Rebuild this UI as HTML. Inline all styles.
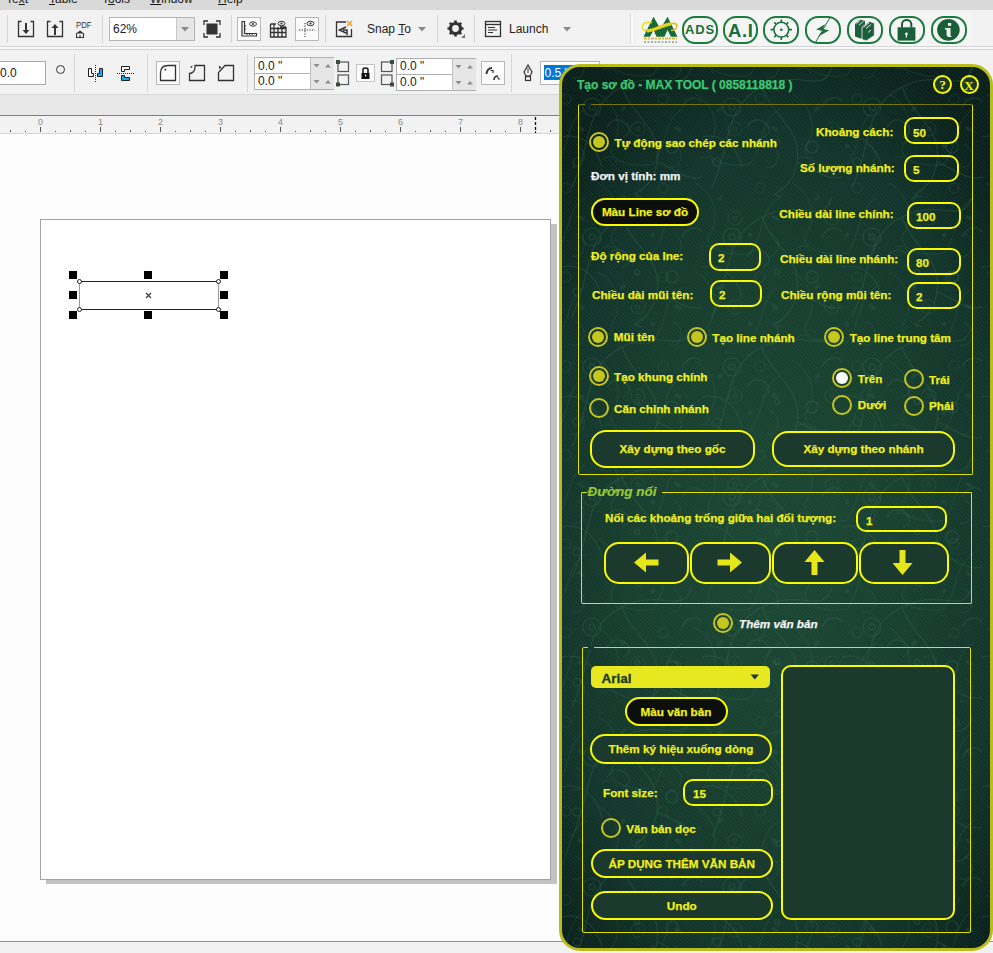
<!DOCTYPE html>
<html><head><meta charset="utf-8">
<style>
*{margin:0;padding:0;box-sizing:border-box}
html,body{width:993px;height:953px;overflow:hidden;background:#fdfdfd;font-family:"Liberation Sans",sans-serif;position:relative}
.a{position:absolute}
.t{position:absolute;white-space:nowrap;line-height:1}
.sep{position:absolute;width:1px;background:#d6d6d6}
#menubar{left:0;top:0;width:993px;height:10px;background:#d9d9d9;overflow:hidden}
#menubar span{position:absolute;top:-8px;font-size:12px;color:#1a1a1a}
#tb1{left:0;top:10px;width:993px;height:36px;background:#f2f2f2}
#tb1line{left:0;top:46px;width:993px;height:4px;background:#fafafa;border-top:1px solid #d4d4d4;border-bottom:1px solid #d4d4d4}
#tb2{left:0;top:50px;width:993px;height:45px;background:#f2f2f2;border-bottom:1px solid #d8d8d8}
#gray{left:0;top:95px;width:993px;height:20px;background:#e8e8e8}
#blue{left:0;top:115px;width:993px;height:1px;background:#10a0f0}
#ruler{left:0;top:116px;width:993px;height:18px;background:#f2f2f2;border-bottom:1px solid #d4d4d4}
#status{left:0;top:941px;width:993px;height:12px;background:#f2f2f2;border-top:1px solid #909090}
#page{left:40px;top:219px;width:511px;height:661px;background:#fff;border:1px solid #a2a2a2}
#shadow{left:46px;top:224px;width:511px;height:660px;background:#c2c2c2}
/* panel */
#panel{left:559px;top:64px;width:434px;height:887px;border:3px solid #b9bd1c;border-radius:21px;overflow:hidden;
 background:radial-gradient(ellipse 72% 62% at 50% 55%,#1c4634 0%,#183d2e 45%,#12322a 75%,#0c231e 92%,#0a1c19 100%)}
.y{color:#f0f01e;font-weight:bold;font-size:11.7px;-webkit-text-stroke:0.25px}
.grp{position:absolute;border:1px solid #e0e000;border-radius:2px}
.tb{position:absolute;border:2px solid #fafa00;border-radius:10px}
.btn{position:absolute;border:2px solid #fafa00;border-radius:15px;background:#1b392c;color:#f0f01e;-webkit-text-stroke:0.25px;font-weight:bold;font-size:11.7px;text-align:center;white-space:nowrap}
.bk{background:#0d0f0c}
.rad{position:absolute;width:20px;height:20px;border:2px solid #c6c61e;border-radius:50%}
.rad.on::after{content:"";position:absolute;left:2px;top:2px;width:12px;height:12px;border-radius:50%;background:#c6c61e}
.rad.wh::after{content:"";position:absolute;left:2px;top:2px;width:12px;height:12px;border-radius:50%;background:#fff}
</style></head><body>
<!-- menubar -->
<div id="menubar" class="a">
 <span style="left:6px">Te<u>x</u>t</span>
 <span style="left:49px"><u>T</u>able</span>
 <span style="left:102px">T<u>o</u>ols</span>
 <span style="left:150px"><u>W</u>indow</span>
 <span style="left:218px"><u>H</u>elp</span>
</div>
<div id="tb1" class="a"></div>
<div id="tb1line" class="a"></div>
<div id="tb2" class="a"></div>
<div id="gray" class="a"></div>
<div id="blue" class="a"></div>
<div id="ruler" class="a"></div>
<div id="shadow" class="a"></div>
<div id="page" class="a"></div>
<div id="status" class="a"></div>
<div class="a" style="left:10px;top:130px;width:1px;height:2px;background:#555"></div>
<div class="a" style="left:25px;top:131px;width:1px;height:1px;background:#555"></div>
<div class="a" style="left:40px;top:127px;width:1px;height:5px;background:#555"></div>
<div class="t" style="left:38px;top:118px;font-size:9px;color:#8a8a8a">0</div>
<div class="a" style="left:55px;top:131px;width:1px;height:1px;background:#555"></div>
<div class="a" style="left:70px;top:130px;width:1px;height:2px;background:#555"></div>
<div class="a" style="left:85px;top:131px;width:1px;height:1px;background:#555"></div>
<div class="a" style="left:100px;top:127px;width:1px;height:5px;background:#555"></div>
<div class="t" style="left:98px;top:118px;font-size:9px;color:#8a8a8a">1</div>
<div class="a" style="left:115px;top:131px;width:1px;height:1px;background:#555"></div>
<div class="a" style="left:130px;top:130px;width:1px;height:2px;background:#555"></div>
<div class="a" style="left:145px;top:131px;width:1px;height:1px;background:#555"></div>
<div class="a" style="left:160px;top:127px;width:1px;height:5px;background:#555"></div>
<div class="t" style="left:158px;top:118px;font-size:9px;color:#8a8a8a">2</div>
<div class="a" style="left:175px;top:131px;width:1px;height:1px;background:#555"></div>
<div class="a" style="left:190px;top:130px;width:1px;height:2px;background:#555"></div>
<div class="a" style="left:205px;top:131px;width:1px;height:1px;background:#555"></div>
<div class="a" style="left:220px;top:127px;width:1px;height:5px;background:#555"></div>
<div class="t" style="left:218px;top:118px;font-size:9px;color:#8a8a8a">3</div>
<div class="a" style="left:235px;top:131px;width:1px;height:1px;background:#555"></div>
<div class="a" style="left:250px;top:130px;width:1px;height:2px;background:#555"></div>
<div class="a" style="left:265px;top:131px;width:1px;height:1px;background:#555"></div>
<div class="a" style="left:280px;top:127px;width:1px;height:5px;background:#555"></div>
<div class="t" style="left:278px;top:118px;font-size:9px;color:#8a8a8a">4</div>
<div class="a" style="left:295px;top:131px;width:1px;height:1px;background:#555"></div>
<div class="a" style="left:310px;top:130px;width:1px;height:2px;background:#555"></div>
<div class="a" style="left:325px;top:131px;width:1px;height:1px;background:#555"></div>
<div class="a" style="left:340px;top:127px;width:1px;height:5px;background:#555"></div>
<div class="t" style="left:338px;top:118px;font-size:9px;color:#8a8a8a">5</div>
<div class="a" style="left:355px;top:131px;width:1px;height:1px;background:#555"></div>
<div class="a" style="left:370px;top:130px;width:1px;height:2px;background:#555"></div>
<div class="a" style="left:385px;top:131px;width:1px;height:1px;background:#555"></div>
<div class="a" style="left:400px;top:127px;width:1px;height:5px;background:#555"></div>
<div class="t" style="left:398px;top:118px;font-size:9px;color:#8a8a8a">6</div>
<div class="a" style="left:415px;top:131px;width:1px;height:1px;background:#555"></div>
<div class="a" style="left:430px;top:130px;width:1px;height:2px;background:#555"></div>
<div class="a" style="left:445px;top:131px;width:1px;height:1px;background:#555"></div>
<div class="a" style="left:460px;top:127px;width:1px;height:5px;background:#555"></div>
<div class="t" style="left:458px;top:118px;font-size:9px;color:#8a8a8a">7</div>
<div class="a" style="left:475px;top:131px;width:1px;height:1px;background:#555"></div>
<div class="a" style="left:490px;top:130px;width:1px;height:2px;background:#555"></div>
<div class="a" style="left:505px;top:131px;width:1px;height:1px;background:#555"></div>
<div class="a" style="left:520px;top:127px;width:1px;height:5px;background:#555"></div>
<div class="t" style="left:518px;top:118px;font-size:9px;color:#8a8a8a">8</div>
<div class="a" style="left:535px;top:131px;width:1px;height:1px;background:#555"></div>
<div class="a" style="left:550px;top:130px;width:1px;height:2px;background:#555"></div>
<svg class="a" style="left:534px;top:116px" width="3" height="17"><path d="M1.5 1V17" stroke="#111" stroke-width="1.3" stroke-dasharray="3 2"/></svg>
<!-- selected rect -->
<div class="a" style="left:79px;top:281px;width:140px;height:29px;border-top:1.3px solid #222;border-bottom:1.3px solid #222;border-left:1.5px solid #9a9a9a;border-right:1.5px solid #9a9a9a"></div>
<div class="a" style="left:69px;top:271px;width:8px;height:8px;background:#000"></div>
<div class="a" style="left:144px;top:271px;width:8px;height:8px;background:#000"></div>
<div class="a" style="left:220px;top:271px;width:8px;height:8px;background:#000"></div>
<div class="a" style="left:69px;top:291px;width:8px;height:8px;background:#000"></div>
<div class="a" style="left:220px;top:291px;width:8px;height:8px;background:#000"></div>
<div class="a" style="left:69px;top:311px;width:8px;height:8px;background:#000"></div>
<div class="a" style="left:144px;top:311px;width:8px;height:8px;background:#000"></div>
<div class="a" style="left:220px;top:311px;width:8px;height:8px;background:#000"></div>
<div class="a" style="left:76.5px;top:278.5px;width:5px;height:5px;background:#fff;border:1px solid #222;border-radius:50%"></div>
<div class="a" style="left:215.5px;top:278.5px;width:5px;height:5px;background:#fff;border:1px solid #222;border-radius:50%"></div>
<div class="a" style="left:76.5px;top:306.5px;width:5px;height:5px;background:#fff;border:1px solid #222;border-radius:50%"></div>
<div class="a" style="left:215.5px;top:306.5px;width:5px;height:5px;background:#fff;border:1px solid #222;border-radius:50%"></div>
<svg class="a" style="left:145px;top:292px" width="7" height="7"><path d="M1 1L6 6M6 1L1 6" stroke="#444" stroke-width="1.4"/></svg>



<!-- TOOLBAR 1 -->
<div class="sep" style="left:7px;top:15px;height:28px"></div>
<svg class="a" style="left:17px;top:20px" width="18" height="18" viewBox="0 0 18 18">
 <path d="M4.5 1.5H1.5V16.5H16.5V1.5H13.5" fill="none" stroke="#333" stroke-width="1.3"/>
 <path d="M9 3V11" stroke="#333" stroke-width="2"/><path d="M5.5 10H12.5L9 14Z" fill="#333"/>
</svg>
<svg class="a" style="left:46px;top:20px" width="18" height="18" viewBox="0 0 18 18">
 <path d="M4.5 1.5H1.5V16.5H16.5V1.5H13.5" fill="none" stroke="#333" stroke-width="1.3"/>
 <path d="M9 7V15" stroke="#333" stroke-width="2"/><path d="M5.5 8H12.5L9 4Z" fill="#333"/>
</svg>
<div class="t" style="left:75.5px;top:21px;font-size:8.5px;color:#333;transform:scaleX(0.92);transform-origin:0 0">PDF</div>
<svg class="a" style="left:76px;top:30px" width="9" height="8" viewBox="0 0 9 8"><path d="M0.5 3V7.5H7.5V3 M4 7.5V5" fill="none" stroke="#333" stroke-width="1.1"/><path d="M0 3.5L4 0.5L8 3.5Z" fill="#333"/></svg>
<div class="sep" style="left:102px;top:15px;height:28px"></div>
<div class="a" style="left:109px;top:17px;width:86px;height:24px;background:#fff;border:1px solid #b4b4b4"></div>
<div class="a" style="left:176px;top:18px;width:18px;height:22px;background:#e6e6e6;border-left:1px solid #c8c8c8"></div>
<svg class="a" style="left:181px;top:27px" width="9" height="5"><path d="M0 0H8L4 4.5Z" fill="#8a8a8a"/></svg>
<div class="t" style="left:113px;top:23px;font-size:12px;color:#222">62%</div>
<svg class="a" style="left:203px;top:20px" width="18" height="18" viewBox="0 0 18 18">
 <path d="M1 5V1H5 M13 1H17V5 M17 13V17H13 M5 17H1V13" fill="none" stroke="#333" stroke-width="1.3"/>
 <rect x="3.5" y="3.5" width="11" height="11" fill="#333"/>
</svg>
<div class="sep" style="left:231px;top:15px;height:28px"></div>
<div class="a" style="left:237px;top:17px;width:24px;height:24px;background:#fcfcfc;border:1px solid #b8b8b8"></div>
<svg class="a" style="left:240px;top:20px" width="18" height="18" viewBox="0 0 18 18">
 <path d="M2 1.5V16H16.5V13.5H4.5V1.5Z" fill="none" stroke="#333" stroke-width="1.2"/>
 <path d="M7 13.5V15 M9.5 13.5V15 M12 13.5V15 M4.5 6H6 M4.5 9H6" stroke="#333" stroke-width="1"/>
 <ellipse cx="13" cy="4" rx="3.5" ry="2.2" fill="none" stroke="#333" stroke-width="1"/><circle cx="13" cy="4" r="1.1" fill="#333"/>
</svg>
<svg class="a" style="left:269px;top:20px" width="18" height="18" viewBox="0 0 18 18">
 <path d="M1.5 4V17H17V7 M1.5 4H7 M1.5 8.5H17 M1.5 12.5H17 M5 4V17 M9 7V17 M13 7V17 M17 7H11" fill="none" stroke="#333" stroke-width="1.3"/>
 <ellipse cx="12.5" cy="3.5" rx="3.5" ry="2.2" fill="none" stroke="#333" stroke-width="1"/><circle cx="12.5" cy="3.5" r="1.1" fill="#333"/>
</svg>
<div class="a" style="left:295px;top:17px;width:24px;height:24px;background:#fcfcfc;border:1px solid #b8b8b8"></div>
<svg class="a" style="left:298px;top:20px" width="18" height="18" viewBox="0 0 18 18">
 <path d="M7 3V17 M1 10H17" fill="none" stroke="#333" stroke-width="1" stroke-dasharray="1.3 1.3"/>
 <ellipse cx="12.5" cy="3.5" rx="3.5" ry="2.2" fill="none" stroke="#333" stroke-width="1"/><circle cx="12.5" cy="3.5" r="1.1" fill="#333"/>
</svg>
<div class="sep" style="left:325px;top:15px;height:28px"></div>
<svg class="a" style="left:335px;top:20px" width="18" height="18" viewBox="0 0 18 18">
 <path d="M11 2H1.5V16.5H16.5V9" fill="none" stroke="#333" stroke-width="1.3"/>
 <path d="M12 1L17 6 M17 1L12 6" stroke="#e0a020" stroke-width="1.3"/>
 <path d="M11 7L4.5 10L11 13 M8 10H12V15" fill="none" stroke="#333" stroke-width="1.5"/>
</svg>
<div class="t" style="left:367px;top:23px;font-size:12px;color:#222">Snap <u>T</u>o</div>
<svg class="a" style="left:418px;top:27px" width="9" height="5"><path d="M0 0H8L4 4.5Z" fill="#8a8a8a"/></svg>
<div class="sep" style="left:437px;top:15px;height:28px"></div>
<svg class="a" style="left:446px;top:19px" width="20" height="20" viewBox="0 0 20 20">
 <circle cx="9.5" cy="9.5" r="5" fill="none" stroke="#333" stroke-width="3.2"/>
 <path d="M9.5 1.5V4 M9.5 15V17.5 M1.5 9.5H4 M15 9.5H17.5 M3.8 3.8L5.6 5.6 M13.4 13.4L15.2 15.2 M3.8 15.2L5.6 13.4 M13.4 5.6L15.2 3.8" stroke="#333" stroke-width="2.6"/>
 <path d="M19 15V19H15Z" fill="#777"/>
</svg>
<div class="sep" style="left:474px;top:15px;height:28px"></div>
<svg class="a" style="left:484px;top:20px" width="18" height="18" viewBox="0 0 18 18">
 <rect x="1.5" y="1.5" width="15" height="15" fill="none" stroke="#333" stroke-width="1.3"/>
 <path d="M1.5 4.5H16.5" stroke="#333" stroke-width="1.3"/>
 <path d="M4 7.5H11 M4 10H13 M4 12.5H9" stroke="#333" stroke-width="1"/>
</svg>
<div class="t" style="left:509px;top:23px;font-size:12px;color:#222">Launch</div>
<svg class="a" style="left:563px;top:27px" width="9" height="5"><path d="M0 0H8L4 4.5Z" fill="#8a8a8a"/></svg>
<div class="a" style="left:630px;top:13px;width:3px;height:31px;background:#fbfbfb;border-left:1px solid #dadada"></div>
<div class="a" style="left:637px;top:12px;width:335px;height:34px;background:#f5f5f5"></div>


<!-- plugin toolbar -->
<svg class="a" style="left:638px;top:14px" width="44" height="32" viewBox="0 0 44 32">
 <path d="M5.5 22.8L15.5 2.8L22.5 15L29.5 2.8L39.5 22.8H33L29.5 16L26.5 22.8H18.5L15.5 16L12 22.8Z" fill="#1a6a38"/>
 <path d="M4.5 12.5C4.5 8.5 9 8 14 8.5 M8 16.5C4.5 16 4 14 4.5 12.5" fill="none" stroke="#ece01c" stroke-width="1.6"/>
 <path d="M7 16.5C17 17 25 11 34.5 9.5C38.5 9 39.5 11 38.5 13.5C37.5 15.5 35 16.5 33 16.5" fill="none" stroke="#d8c020" stroke-width="1.6"/>
 <path d="M9 17C17 16.5 24 11 33 9.8" fill="none" stroke="#e8d21c" stroke-width="3.2"/>
 <path d="M6 24.5H39" stroke="#d4b428" stroke-width="2.2" stroke-dasharray="3 1 2 1" opacity="0.9"/>
 <path d="M6 28H39" stroke="#2a5a3a" stroke-width="1.2" stroke-dasharray="2 1.5" opacity="0.8"/>
</svg>
<div class="a" style="left:682px;top:16px;width:36px;height:28px;border:2.2px solid #1b7a3e;border-radius:13px"></div>
<div class="t" style="left:685px;top:23.2px;font-size:13px;font-weight:bold;color:#1b6e3a;letter-spacing:0.9px">ADS</div>
<div class="a" style="left:723px;top:16px;width:35px;height:28px;border:2.2px solid #1b7a3e;border-radius:13px"></div>
<div class="t" style="left:728px;top:21.5px;font-size:18.5px;font-weight:bold;color:#1b6e3a;letter-spacing:0.6px">A.I</div>
<div class="a" style="left:763px;top:16px;width:36px;height:28px;border:2.2px solid #1b7a3e;border-radius:13px"></div>
<svg class="a" style="left:763px;top:16px" width="36" height="28" viewBox="763 16 36 28">
 <circle cx="781.3" cy="29.7" r="7.4" fill="none" stroke="#1b6e3a" stroke-width="1.5"/>
 <circle cx="781.3" cy="29.7" r="1.3" fill="#1b6e3a"/>
 <path d="M781.3 19.4V22.4 M781.3 37V40 M770.6 29.7H773.9 M788.7 29.7H792 M774.3 22.3L776 24 M788.3 22.3L786.6 24 M774.3 37.1L776 35.4 M788.3 37.1L786.6 35.4" stroke="#1b6e3a" stroke-width="1.7"/>
</svg>
<div class="a" style="left:805px;top:16px;width:36px;height:28px;border:2.2px solid #1b7a3e;border-radius:13px"></div>
<svg class="a" style="left:805px;top:16px" width="36" height="28" viewBox="805 16 36 28">
 <path d="M830 17.5L815.5 42.5" stroke="#1b6e3a" stroke-width="1"/>
 <path d="M825 24.2L816.2 29.6L822.8 31L817.5 37L829.3 30.3L823 29Z" fill="#1b6e3a"/>
</svg>
<div class="a" style="left:846.5px;top:16px;width:36px;height:28px;border:2.2px solid #1b7a3e;border-radius:13px"></div>
<svg class="a" style="left:846px;top:16px" width="36" height="28" viewBox="846 16 36 28">
 <path d="M855 24L860 19.5L865 21V37.5L860.5 38.5L855 36.5Z" fill="#1b5e3a"/>
 <path d="M862 27L869.5 21.5L874.3 23V35.5L866.5 40.7L862 39.5Z" fill="#1b5e3a" stroke="#f0f0f0" stroke-width="0.8"/>
 <path d="M856.5 23.8L860.5 20.3 M859 25.2L863.5 21.3 M863.5 27.2L869 23 M866 28.5L871 24.5 M868 32.5L871 30" stroke="#f0f0f0" stroke-width="0.9"/>
</svg>
<div class="a" style="left:888.5px;top:16px;width:36px;height:28px;border:2.2px solid #1b7a3e;border-radius:13px"></div>
<svg class="a" style="left:888px;top:16px" width="36" height="28" viewBox="888 16 36 28">
 <path d="M902 27.5V24C902 18.8 911.3 18.8 911.3 24V27.5" fill="none" stroke="#1b5e3a" stroke-width="2"/>
 <rect x="897.6" y="27.3" width="17.8" height="13.3" fill="#1b5e3a"/>
 <circle cx="906.4" cy="34" r="1.4" fill="#f0f0f0"/><rect x="905.8" y="34" width="1.2" height="3.5" fill="#f0f0f0"/>
</svg>
<div class="a" style="left:930.5px;top:16px;width:36px;height:28px;border:2.2px solid #1b7a3e;border-radius:13px"></div>
<svg class="a" style="left:930px;top:16px" width="37" height="28" viewBox="930 16 37 28">
 <ellipse cx="948.4" cy="29.85" rx="11.3" ry="10.9" fill="#1b5e3a"/>
 <rect x="947.9" y="23" width="3.3" height="2.8" fill="#f2f2f2"/>
 <path d="M945 28H950.5V35C950.5 36 951 36.2 951.6 36.2V37H949C947.5 37 946.6 36 946.6 34.5V29.5H945Z" fill="#f2f2f2"/>
</svg>
<!-- TOOLBAR 2 -->
<div class="a" style="left:0;top:61px;width:46px;height:24px;background:#fff;border:1px solid #a8a8a8;border-left:none"></div>
<div class="t" style="left:0px;top:67px;font-size:12px;color:#222">0.0</div>
<div class="a" style="left:56px;top:64.8px;width:9px;height:9px;border:1.2px solid #333;border-radius:50%"></div>
<div class="sep" style="left:74px;top:54px;height:38px"></div>
<svg class="a" style="left:84px;top:60px" width="56" height="26" viewBox="84 60 56 26">
 <path d="M88.5 68.5H91.5V73.5H93.5V76.5H88.5Z" fill="#fff" stroke="#222" stroke-width="1"/>
 <path d="M99.5 68.5H102.5V76.5H97.5V73.5H99.5Z" fill="#1aa8f0" stroke="#222" stroke-width="1"/>
 <path d="M95.5 65V82" stroke="#222" stroke-width="1" stroke-dasharray="1 1"/>
 <path d="M121.5 66.5H129.5V69.5H124.5V71.5H121.5Z" fill="#fff" stroke="#222" stroke-width="1"/>
 <path d="M121.5 75.5H124.5V77.5H129.5V80.5H121.5Z" fill="#1aa8f0" stroke="#222" stroke-width="1"/>
 <path d="M117 73.5H134" stroke="#222" stroke-width="1" stroke-dasharray="1 1"/>
</svg>
<div class="sep" style="left:147px;top:54px;height:38px"></div>
<div class="a" style="left:156px;top:61px;width:24px;height:24px;background:#fcfcfc;border:1px solid #b8b8b8"></div>
<svg class="a" style="left:159px;top:64px" width="18" height="18" viewBox="0 0 18 18">
 <path d="M1.5 16.5V9C1.5 4 4.5 1.5 9 1.5H16.5V16.5Z" fill="none" stroke="#333" stroke-width="1.3"/>
 <path d="M5 5.5L7.5 4.5L6.5 7Z" fill="#333"/>
</svg>
<svg class="a" style="left:188px;top:64px" width="18" height="18" viewBox="0 0 18 18">
 <path d="M1.5 16.5V9.5C4.5 9.5 7 7 7 3.5V1.5H16.5V16.5Z" fill="none" stroke="#333" stroke-width="1.3"/>
 <path d="M2 3L4.5 1.5L4 4Z" fill="#333"/>
</svg>
<svg class="a" style="left:217px;top:64px" width="18" height="18" viewBox="0 0 18 18">
 <path d="M1.5 16.5V8.5L8 1.5H16.5V16.5Z" fill="none" stroke="#333" stroke-width="1.3"/>
 <path d="M2 1.5L4.5 3.5L2 5Z" fill="#333"/>
</svg>
<div class="sep" style="left:247px;top:54px;height:38px"></div>
<!-- spin pair 1 -->
<div class="a" style="left:254px;top:57px;width:80px;height:33px;background:#fff;border:1px solid #b0b0b0"></div>
<div class="a" style="left:254px;top:73px;width:80px;height:1px;background:#b0b0b0"></div>
<div class="a" style="left:309.5px;top:58px;width:24px;height:31px;background:#e6e6e6;border-left:1px solid #c0c0c0"></div>
<svg class="a" style="left:310px;top:60px" width="24" height="28"><path d="M3.5 4H9.5L6.5 7.5Z M15 7.5H21L18 4Z M3.5 20H9.5L6.5 23.5Z M15 23.5H21L18 20Z" fill="#8c8c8c"/></svg>
<div class="t" style="left:258px;top:59.5px;font-size:12px;color:#222">0.0 "</div>
<div class="t" style="left:258px;top:75px;font-size:12px;color:#222">0.0 "</div>
<svg class="a" style="left:335px;top:59px" width="16" height="28" viewBox="0 0 16 28">
 <rect x="3" y="3" width="10.5" height="9.5" fill="none" stroke="#555" stroke-width="1.2"/>
 <rect x="3" y="16" width="10.5" height="9.5" fill="none" stroke="#555" stroke-width="1.2"/>
 <rect x="1" y="1" width="4" height="4" fill="#3c4c3c"/><rect x="1" y="23.5" width="4" height="4" fill="#3c4c3c"/>
</svg>
<div class="a" style="left:356px;top:64px;width:19px;height:18px;background:#fcfcfc;border:1px solid #c4c4c4"></div>
<svg class="a" style="left:359px;top:66px" width="13" height="14" viewBox="0 0 13 14"><path d="M4 7V3.5C4 1.5 9 1.5 9 3.5V7" fill="none" stroke="#111" stroke-width="1.5"/><rect x="2.5" y="7" width="8" height="6" fill="#111"/><rect x="6" y="8.5" width="1.2" height="2" fill="#fff"/></svg>
<svg class="a" style="left:379px;top:59px" width="16" height="28" viewBox="0 0 16 28">
 <rect x="2.5" y="3" width="10.5" height="9.5" fill="none" stroke="#555" stroke-width="1.2"/>
 <rect x="2.5" y="16" width="10.5" height="9.5" fill="none" stroke="#555" stroke-width="1.2"/>
 <rect x="11" y="1" width="4" height="4" fill="#3c4c3c"/><rect x="11" y="23.5" width="4" height="4" fill="#3c4c3c"/>
</svg>
<!-- spin pair 2 -->
<div class="a" style="left:396px;top:57.5px;width:80px;height:33px;background:#fff;border:1px solid #b0b0b0"></div>
<div class="a" style="left:396px;top:73.5px;width:80px;height:1px;background:#b0b0b0"></div>
<div class="a" style="left:451.5px;top:58.5px;width:24px;height:31px;background:#e6e6e6;border-left:1px solid #c0c0c0"></div>
<svg class="a" style="left:452px;top:60.5px" width="24" height="28"><path d="M3.5 4H9.5L6.5 7.5Z M15 7.5H21L18 4Z M3.5 20H9.5L6.5 23.5Z M15 23.5H21L18 20Z" fill="#8c8c8c"/></svg>
<div class="t" style="left:400px;top:60px;font-size:12px;color:#222">0.0 "</div>
<div class="t" style="left:400px;top:75.5px;font-size:12px;color:#222">0.0 "</div>
<div class="a" style="left:481px;top:61px;width:24px;height:24px;background:#fcfcfc;border:1px solid #b8b8b8"></div>
<svg class="a" style="left:484px;top:64px" width="18" height="18" viewBox="0 0 18 18">
 <path d="M2.5 10C2.5 6.5 5 4 8 4" fill="none" stroke="#333" stroke-width="2"/><path d="M6.5 6.5H9V9" fill="none" stroke="#333" stroke-width="1.2"/>
 <path d="M10 16C10 13.5 11.5 12 14 12" fill="none" stroke="#333" stroke-width="1.6"/><path d="M13 14H15V16" fill="none" stroke="#333" stroke-width="1"/>
</svg>
<div class="sep" style="left:511px;top:54px;height:38px"></div>
<svg class="a" style="left:522px;top:64px" width="12" height="18" viewBox="0 0 12 18">
 <path d="M6 1L2 8L4 12H8L10 8Z" fill="none" stroke="#333" stroke-width="1.2"/><path d="M6 4V9" stroke="#333" stroke-width="1"/>
 <rect x="3.5" y="12.5" width="5" height="4" fill="none" stroke="#333" stroke-width="1.2"/>
</svg>
<div class="a" style="left:540px;top:61px;width:60px;height:24px;background:#fff;border:1px solid #b4b4b4"></div>
<div class="a" style="left:544px;top:65px;width:32px;height:15px;background:#0078d7"></div>
<div class="t" style="left:544.5px;top:67px;font-size:12px;color:#fff">0.5 "</div>

<!-- PANEL -->
<div id="panel" class="a"><svg class="a" style="left:0;top:0" width="428" height="882">
 <defs>
  <pattern id="str" width="3" height="3" patternUnits="userSpaceOnUse" patternTransform="rotate(-45)">
   <rect width="1.2" height="3" fill="#3a7a5a" opacity="0.16"/>
  </pattern>
  <pattern id="flo" width="140" height="130" patternUnits="userSpaceOnUse">
   <g fill="none" stroke="#3d7a5c" stroke-width="1.1" opacity="0.28">
    <path d="M10 120C30 80 20 40 60 20S120 30 130 0"/>
    <path d="M60 20C70 50 100 60 95 95S60 125 80 130"/>
    <circle cx="30" cy="40" r="9"/><circle cx="30" cy="40" r="3"/>
    <circle cx="110" cy="80" r="6"/>
    <path d="M0 70C20 65 35 80 40 100"/>
    <path d="M95 95C110 100 125 115 140 110"/>
    <path d="M120 40c5-10 15-12 20-5"/>
    <circle cx="75" cy="75" r="2.5"/><circle cx="15" cy="95" r="4"/>
    <path d="M45 60q8-12 18-4t-2 14"/>
   </g>
  </pattern>
  <pattern id="flo2" width="97" height="89" patternUnits="userSpaceOnUse" patternTransform="translate(31 17)">
   <g fill="none" stroke="#3d7a5c" stroke-width="1" opacity="0.22">
    <path d="M5 10C25 20 30 45 20 60S40 85 60 80"/>
    <path d="M60 80C75 60 70 35 90 25"/>
    <circle cx="70" cy="15" r="5"/><circle cx="45" cy="45" r="7"/><circle cx="45" cy="45" r="2"/>
    <path d="M80 60q10 5 8 15t-12 8"/>
    <path d="M10 75c6-4 12-2 14 4"/>
   </g>
   <g fill="#3d7a5c" opacity="0.18">
    <ellipse cx="85" cy="45" rx="4" ry="2" transform="rotate(30 85 45)"/>
    <ellipse cx="30" cy="25" rx="3.5" ry="1.8" transform="rotate(-40 30 25)"/>
    <circle cx="60" cy="62" r="2.2"/>
   </g>
  </pattern>
 </defs>
 <rect width="428" height="882" fill="url(#flo)"/>
 <rect width="428" height="882" fill="url(#flo2)"/>
 <rect width="428" height="882" fill="url(#str)"/>
</svg></div>

<div class="t" style="left:577px;top:79px;font-size:12px;font-weight:bold;color:#3dc873;-webkit-text-stroke:0.25px">Tạo sơ đồ - MAX TOOL ( 0858118818 )</div>


<!-- group 1 -->
<div class="grp" style="left:578px;top:104px;width:395px;height:371px;border-top-color:#72780e"></div>
<div class="a" style="left:585px;top:103px;width:6px;height:3px;background:#0f2a22"></div>
<div class="rad on" style="left:589px;top:132px"></div>
<div class="t y" style="left:614.5px;top:137.4px">Tự động sao chép các nhánh</div>
<div class="t y" style="left:591px;top:169.7px;color:#f2f2f2">Đơn vị tính: mm</div>
<div class="btn bk" style="left:591px;top:198px;width:108px;height:28px;line-height:24px">Màu Line sơ đồ</div>
<div class="t y" style="left:591px;top:249.8px">Độ rộng của lne:</div>
<div class="tb" style="left:709px;top:243px;width:52px;height:28px"></div>
<div class="t y" style="left:718px;top:252px">2</div>
<div class="t y" style="left:592px;top:288.6px">Chiều dài mũi tên:</div>
<div class="tb" style="left:710px;top:280px;width:52px;height:27px"></div>
<div class="t y" style="left:719px;top:289px">2</div>

<div class="t y" style="left:816px;top:125.9px">Khoảng cách:</div>
<div class="tb" style="left:904px;top:117px;width:55px;height:27px"></div>
<div class="t y" style="left:913px;top:127px">50</div>
<div class="t y" style="left:800px;top:162.1px">Số lượng nhánh:</div>
<div class="tb" style="left:904px;top:154.5px;width:55px;height:27px"></div>
<div class="t y" style="left:913px;top:164px">5</div>
<div class="t y" style="left:779.3px;top:208.3px">Chiều dài line chính:</div>
<div class="tb" style="left:907px;top:201.5px;width:54px;height:27px"></div>
<div class="t y" style="left:916px;top:211px">100</div>
<div class="t y" style="left:780px;top:252.8px">Chiều dài line nhánh:</div>
<div class="tb" style="left:907px;top:247.5px;width:54px;height:27px"></div>
<div class="t y" style="left:916px;top:257px">80</div>
<div class="t y" style="left:781px;top:289.1px">Chiều rộng mũi tên:</div>
<div class="tb" style="left:907px;top:281.5px;width:54px;height:27px"></div>
<div class="t y" style="left:916px;top:291px">2</div>

<div class="rad on" style="left:588px;top:327px"></div>
<div class="t y" style="left:613.8px;top:330.9px">Mũi tên</div>
<div class="rad on" style="left:687px;top:327px"></div>
<div class="t y" style="left:712.3px;top:331.6px">Tạo line nhánh</div>
<div class="rad on" style="left:824px;top:327px"></div>
<div class="t y" style="left:849.7px;top:332px">Tạo line trung tâm</div>
<div class="rad on" style="left:589px;top:366px"></div>
<div class="t y" style="left:614px;top:371px">Tạo khung chính</div>
<div class="rad" style="left:589px;top:398px"></div>
<div class="t y" style="left:614px;top:402.5px">Căn chỉnh nhánh</div>
<div class="rad wh" style="left:832px;top:368px"></div>
<div class="t y" style="left:857.7px;top:373px">Trên</div>
<div class="rad" style="left:904px;top:369px"></div>
<div class="t y" style="left:929px;top:373.5px">Trái</div>
<div class="rad" style="left:832px;top:395px"></div>
<div class="t y" style="left:857.7px;top:399px">Dưới</div>
<div class="rad" style="left:904px;top:396px"></div>
<div class="t y" style="left:929px;top:400px">Phải</div>
<div class="btn" style="left:590px;top:430px;width:165px;height:38px;line-height:34px;border-radius:16px">Xây dựng theo gốc</div>
<div class="btn" style="left:772px;top:430.5px;width:183px;height:36px;line-height:32px;border-radius:16px">Xây dựng theo nhánh</div>

<!-- group 2 -->
<div class="grp" style="left:580.5px;top:492px;width:391px;height:112px;border-top:none"></div>
<div class="a" style="left:580.5px;top:492px;width:6px;height:1px;background:#e0e000;border-top-left-radius:2px"></div>
<div class="a" style="left:662px;top:492px;width:309.5px;height:1px;background:#e0e000"></div>
<div class="t" style="left:587.5px;top:485px;font-size:13.5px;font-weight:bold;font-style:italic;color:#98c836;-webkit-text-stroke:0.2px">Đường nối</div>
<div class="t y" style="left:605px;top:511.9px">Nối các khoảng trống giữa hai đối tượng:</div>
<div class="tb" style="left:855.5px;top:505.5px;width:91px;height:26px"></div>
<div class="t y" style="left:866px;top:515px">1</div>
<div class="btn" style="left:603.5px;top:541.5px;width:85px;height:42px"></div>
<div class="btn" style="left:689.5px;top:541.5px;width:81px;height:42px"></div>
<div class="btn" style="left:771.5px;top:541.5px;width:86px;height:42px"></div>
<div class="btn" style="left:858.5px;top:541.5px;width:90px;height:42px"></div>
<svg class="a" style="left:603px;top:541px" width="346" height="43" viewBox="603 541 346 43">
 <path fill="#e6e619" d="M634 562.5 L646 552.5 L646 559.5 L658.5 559.5 L658.5 565.5 L646 565.5 L646 572.5 Z"/>
 <path fill="#e6e619" d="M742 562.5 L730 552.5 L730 559.5 L717.5 559.5 L717.5 565.5 L730 565.5 L730 572.5 Z"/>
 <path fill="#e6e619" d="M814.5 550 L824.5 562 L817.5 562 L817.5 575 L811.5 575 L811.5 562 L804.5 562 Z"/>
 <path fill="#e6e619" d="M902.5 575 L912.5 563 L905.5 563 L905.5 550 L899.5 550 L899.5 563 L892.5 563 Z"/>
</svg>
<div class="rad on" style="left:713px;top:613px"></div>
<div class="t" style="left:739px;top:617.5px;font-size:11.7px;font-weight:bold;font-style:italic;color:#f4f4f4;-webkit-text-stroke:0.25px">Thêm văn bản</div>

<!-- group 3 -->
<div class="grp" style="left:581.5px;top:647px;width:389px;height:286px"></div>
<div class="a" style="left:588px;top:646px;width:6px;height:3px;background:#17392b"></div>
<div class="a" style="left:591px;top:665.5px;width:178.5px;height:22.5px;background:#e8e820;border-radius:5px"></div>
<div class="t" style="left:601.5px;top:671.5px;font-size:13.5px;font-weight:bold;color:#1c3a2c;-webkit-text-stroke:0.3px">Arial</div>
<svg class="a" style="left:750px;top:674px" width="10" height="6"><path d="M0.5 0.5 L9 0.5 L4.75 5.5Z" fill="#1c3a2c"/></svg>
<div class="btn bk" style="left:624.5px;top:696.5px;width:103px;height:29px;line-height:25px">Màu văn bản</div>
<div class="btn" style="left:590px;top:733.5px;width:182px;height:30px;line-height:26px">Thêm ký hiệu xuống dòng</div>
<div class="t y" style="left:603px;top:787px">Font size:</div>
<div class="tb" style="left:683px;top:778.5px;width:89.5px;height:27px"></div>
<div class="t y" style="left:693px;top:787.5px">15</div>
<div class="rad" style="left:600.5px;top:818px"></div>
<div class="t y" style="left:626.3px;top:823px">Văn bản dọc</div>
<div class="btn" style="left:591px;top:848.5px;width:181.5px;height:29px;line-height:25px">ÁP DỤNG THÊM VĂN BẢN</div>
<div class="btn" style="left:591px;top:890.5px;width:181.5px;height:29px;line-height:25px">Undo</div>
<div class="a" style="left:780.5px;top:665px;width:174.5px;height:255px;border:2px solid #fafa00;border-radius:10px;background:#1b392c"></div>

<!-- help / close -->
<div class="a" style="left:933px;top:75px;width:19px;height:19px;border:2px solid #fafa00;border-radius:50%;background:#1b392c"></div>
<div class="t" style="left:936.5px;top:77px;font:bold 13.5px 'Liberation Serif';color:#f6f600;width:12px;text-align:center">?</div>
<div class="a" style="left:959.5px;top:75px;width:19px;height:19px;border:2px solid #fafa00;border-radius:50%;background:#1b392c"></div>
<div class="t" style="left:963px;top:77.5px;font:bold 13px 'Liberation Serif';color:#f6f600;width:12px;text-align:center">X</div>
</body></html>
